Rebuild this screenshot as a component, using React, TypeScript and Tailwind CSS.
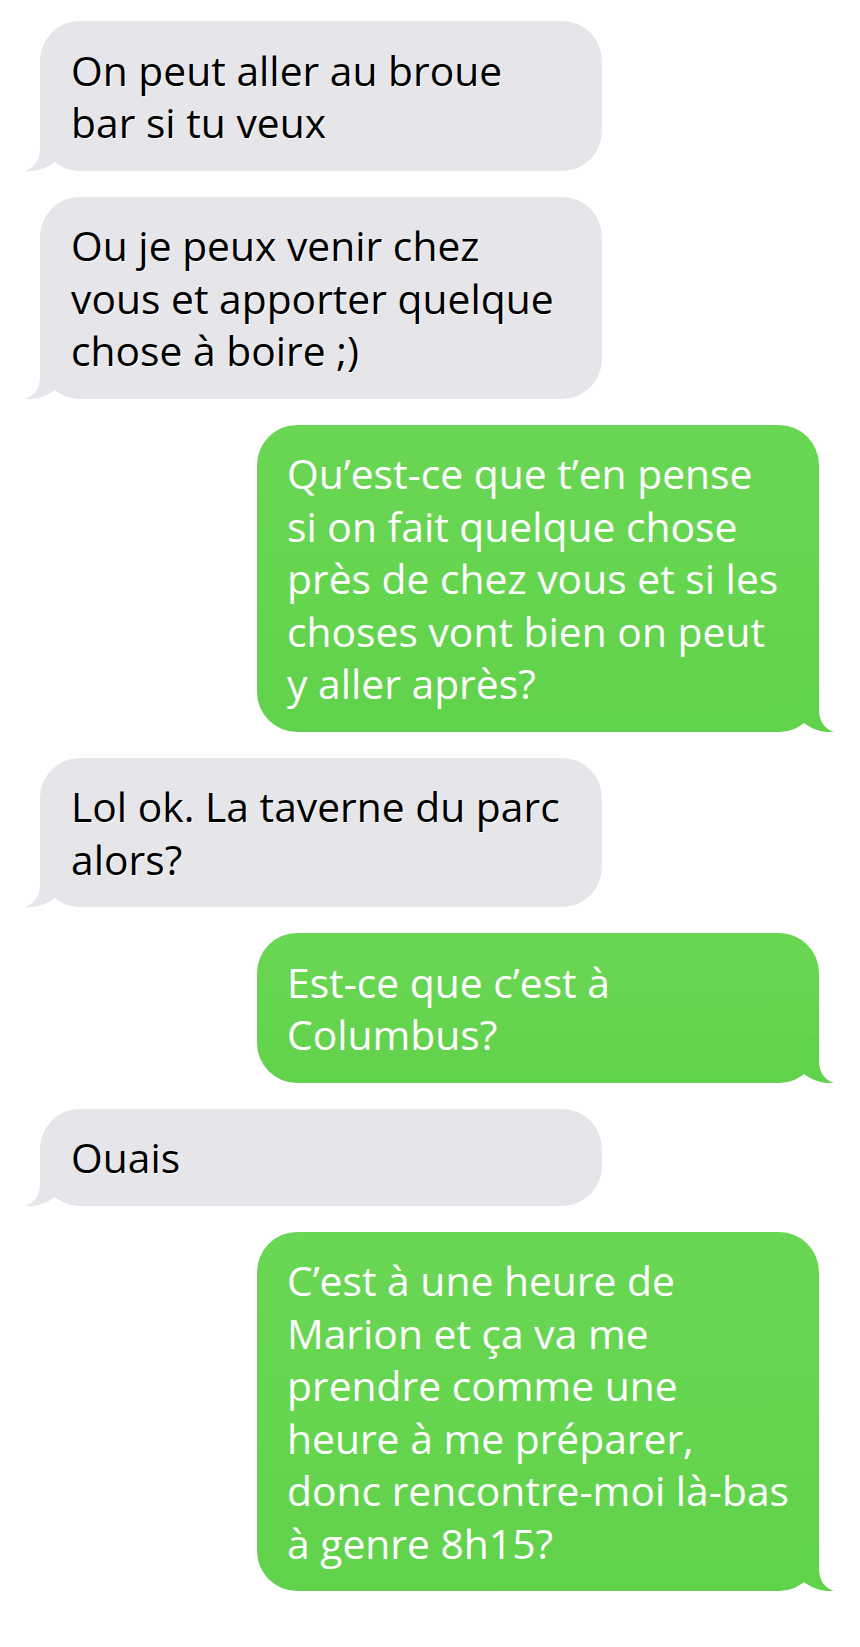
import React from "react";

type Msg = { id: number; mine: boolean; lines: string[] };

const messages: Msg[] = [
  { id: 1, mine: false, lines: ["On peut aller au broue", "bar si tu veux"] },
  {
    id: 2,
    mine: false,
    lines: ["Ou je peux venir chez", "vous et apporter quelque", "chose à boire ;)"],
  },
  {
    id: 3,
    mine: true,
    lines: [
      "Qu’est-ce que t’en pense",
      "si on fait quelque chose",
      "près de chez vous et si les",
      "choses vont bien on peut",
      "y aller après?",
    ],
  },
  { id: 4, mine: false, lines: ["Lol ok. La taverne du parc", "alors?"] },
  { id: 5, mine: true, lines: ["Est-ce que c’est à", "Columbus?"] },
  { id: 6, mine: false, lines: ["Ouais"] },
  {
    id: 7,
    mine: true,
    lines: [
      "C’est à une heure de",
      "Marion et ça va me",
      "prendre comme une",
      "heure à me préparer,",
      "donc rencontre-moi là-bas",
      "à genre 8h15?",
    ],
  },
];

function Tail({ color, mine }: { color: string; mine: boolean }) {
  return (
    <svg
      width="31"
      height="46"
      viewBox="0 0 31 46"
      className={
        mine
          ? "absolute right-[-15px] bottom-0 -scale-x-100"
          : "absolute left-[-15px] bottom-0"
      }
    >
      <path d="M15,0 L15,23 C15,36 9,43 0,46 C12,47 22,43 30,37 L30,0 Z" fill={color} />
    </svg>
  );
}

function Bubble({ m }: { m: Msg }) {
  return (
    <div
      className={
        m.mine
          ? "relative ml-[257px] w-[562px] rounded-[40px] bg-linear-to-b from-[#6ad754] to-[#61d24b] pl-[30px] pr-[20px] pt-[22.5px] pb-[22px] text-white"
          : "relative ml-[40px] w-[562px] rounded-[40px] bg-[#e5e5ea] pl-[31px] pr-[20px] pt-[22.5px] pb-[22px] text-black [text-shadow:1px_1px_0_rgba(255,255,255,0.9)]"
      }
    >
      {m.lines.map((l, i) => (
        <div key={i} className="whitespace-nowrap">
          {l}
        </div>
      ))}
      <Tail color={m.mine ? "#61d24b" : "#e5e5ea"} mine={m.mine} />
    </div>
  );
}

export default function App() {
  return (
    <div className="min-h-[1647px] w-[860px] bg-white pt-[21px] pb-[56px] font-['Open_Sans',sans-serif] text-[40.8px] leading-[52.5px]">
      <div className="flex flex-col gap-[26px]">
        {messages.map((m) => (
          <Bubble key={m.id} m={m} />
        ))}
      </div>
    </div>
  );
}
